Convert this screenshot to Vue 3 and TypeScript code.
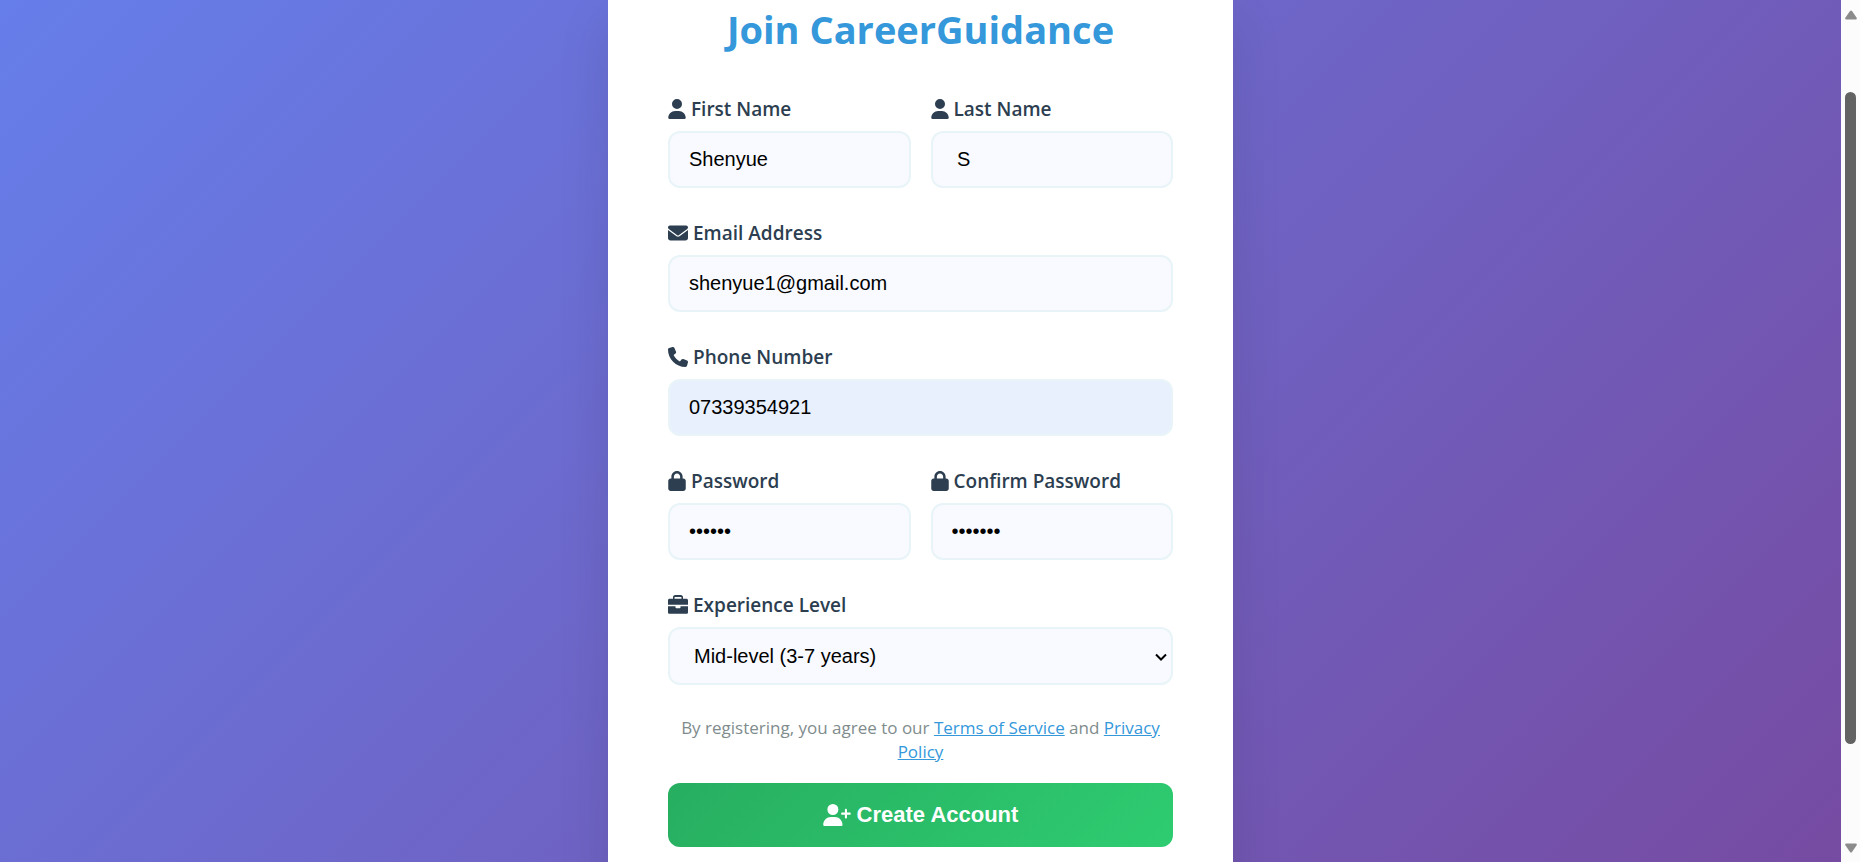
<script setup lang="ts">
import { reactive } from 'vue'

const form = reactive({
  firstName: 'Shenyue',
  lastName: ' S',
  email: 'shenyue1@gmail.com',
  phone: '07339354921',
  password: 'abc123',
  confirm: 'abc1234',
  level: 'mid',
})

const icons = {
  user: 'M224 256A128 128 0 1 0 224 0a128 128 0 1 0 0 256zm-45.7 48C79.8 304 0 383.8 0 482.3C0 498.7 13.3 512 29.7 512H418.3c16.4 0 29.7-13.3 29.7-29.7C448 383.8 368.2 304 269.7 304H178.3z',
  mail: 'M48 64C21.500 64 0 85.500 0 112c0 15.100 7.100 29.300 19.200 38.400L236.800 313.600c11.400 8.500 27 8.500 38.400 0L492.800 150.400c12.100-9.100 19.200-23.300 19.200-38.400c0-26.500-21.500-48-48-48H48zM0 176V384c0 35.300 28.700 64 64 64H448c35.300 0 64-28.700 64-64V176L294.400 339.200c-22.800 17.100-54 17.100-76.800 0L0 176z',
  phone: 'M164.900 24.600c-7.700-18.600-28-28.500-47.400-23.200l-88 24C12.100 30.200 0 46 0 64C0 311.400 200.600 512 448 512c18 0 33.800-12.100 38.600-29.500l24-88c5.300-19.400-4.600-39.700-23.200-47.400l-96-40c-16.300-6.800-35.200-2.100-46.300 11.600L304.700 368C234.300 334.700 177.300 277.700 144 207.300L193.300 167c13.700-11.200 18.400-30 11.600-46.300l-40-96z',
  lock: 'M144 144v48H304V144c0-44.200-35.800-80-80-80s-80 35.800-80 80zM80 192V144C80 64.500 144.500 0 224 0s144 64.500 144 144v48h16c35.300 0 64 28.700 64 64V448c0 35.300-28.700 64-64 64H64c-35.300 0-64-28.700-64-64V256c0-35.300 28.700-64 64-64H80z',
  briefcase: 'M176 48H336c4.400 0 8 3.600 8 8V96H168V56c0-4.400 3.600-8 8-8zm-48 8V96H40C16 96 0 112 0 136v112H512V136c0-24-16-40-40-40H384V56c0-30.900-25.100-56-56-56H184c-30.900 0-56 25.100-56 56zM512 288H320v32c0 12-8 20-20 20H212c-12 0-20-8-20-20V288H0V440c0 24 16 40 40 40H472c24 0 40-16 40-40V288z',
  userPlus: 'M96 128a128 128 0 1 1 256 0A128 128 0 1 1 96 128zM0 482.300C0 383.800 79.800 304 178.300 304h91.400C368.200 304 448 383.800 448 482.300c0 16.400-13.300 29.700-29.700 29.700H29.700C13.300 512 0 498.700 0 482.300zM504 312V248H440c-13.300 0-24-10.700-24-24s10.700-24 24-24h64V136c0-13.300 10.700-24 24-24s24 10.700 24 24v64h64c13.300 0 24 10.700 24 24s-10.700 24-24 24H552v64c0 13.300-10.700 24-24 24s-24-10.700-24-24z',
}
</script>

<template>
  <div class="window">
    <main class="page">
      <form class="card" @submit.prevent>
        <h1>Join CareerGuidance</h1>

        <div class="row">
          <div class="group">
            <label for="first">
              <svg class="icon" viewBox="0 0 448 512" aria-hidden="true"><path :d="icons.user" /></svg>
              First Name
            </label>
            <input id="first" v-model="form.firstName" type="text" />
          </div>
          <div class="group">
            <label for="last">
              <svg class="icon" viewBox="0 0 448 512" aria-hidden="true"><path :d="icons.user" /></svg>
              Last Name
            </label>
            <input id="last" v-model="form.lastName" type="text" />
          </div>
        </div>

        <div class="group">
          <label for="email">
            <svg class="icon wide" viewBox="0 0 512 512" aria-hidden="true"><path :d="icons.mail" /></svg>
            Email Address
          </label>
          <input id="email" v-model="form.email" type="email" />
        </div>

        <div class="group">
          <label for="phone">
            <svg class="icon wide" viewBox="0 0 512 512" aria-hidden="true"><path :d="icons.phone" /></svg>
            Phone Number
          </label>
          <input id="phone" v-model="form.phone" class="filled" type="tel" />
        </div>

        <div class="row">
          <div class="group">
            <label for="password">
              <svg class="icon" viewBox="0 0 448 512" aria-hidden="true"><path :d="icons.lock" /></svg>
              Password
            </label>
            <input id="password" v-model="form.password" type="password" />
          </div>
          <div class="group">
            <label for="confirm">
              <svg class="icon" viewBox="0 0 448 512" aria-hidden="true"><path :d="icons.lock" /></svg>
              Confirm Password
            </label>
            <input id="confirm" v-model="form.confirm" type="password" />
          </div>
        </div>

        <div class="group">
          <label for="level">
            <svg class="icon wide" viewBox="0 0 512 512" aria-hidden="true"><path :d="icons.briefcase" /></svg>
            Experience Level
          </label>
          <div class="select">
            <select id="level" v-model="form.level">
              <option value="mid">Mid-level (3-7 years)</option>
            </select>
            <svg viewBox="0 0 12 8" aria-hidden="true"><path d="M1 1.500 6 6.500 11 1.500" /></svg>
          </div>
        </div>

        <p class="terms">
          By registering, you agree to our <a href="#terms">Terms of Service</a> and
          <a href="#privacy">Privacy Policy</a>
        </p>

        <button class="submit" type="submit">
          <svg viewBox="0 0 640 512" aria-hidden="true"><path :d="icons.userPlus" /></svg>
          Create Account
        </button>
      </form>
    </main>

    <div class="scrollbar" aria-hidden="true">
      <svg viewBox="0 0 12 10"><path d="M5 1Q6 0 7 1L11.500 7.500Q12.500 9.500 10.500 9.500H1.500Q-.5 9.500 .5 7.500Z" /></svg>
      <div class="track">
        <span class="before"></span>
        <span class="thumb"></span>
        <span class="after"></span>
      </div>
      <svg viewBox="0 0 12 10"><path d="M5 9Q6 10 7 9L11.500 2.500Q12.500 .5 10.500 .5H1.500Q-.5 .5 .5 2.500Z" /></svg>
    </div>
  </div>
</template>

<style>
body {
  margin: 0;
}
</style>

<style scoped>
.window {
  display: flex;
  height: 100vh;
  overflow: hidden;
  font-family: "Open Sans", "Noto Sans", sans-serif;
}

.page {
  flex: 1;
  display: flex;
  justify-content: center;
  overflow: hidden;
  background: linear-gradient(135deg, #667eea 0%, #764ba2 100%);
}

.card {
  box-sizing: border-box;
  width: 100%;
  max-width: 625px;
  min-height: 100%;
  align-self: flex-start;
  padding: 2px 60px 60px;
  background: #fff;
  box-shadow: 0 20px 50px rgba(0, 0, 0, 0.1);
}

h1 {
  margin: 0 0 39px;
  color: #3498db;
  font-size: 38px;
  font-weight: 700;
  line-height: 54px;
  text-align: center;
  white-space: nowrap;
}

.row {
  display: grid;
  grid-template-columns: 1fr 1fr;
  gap: 20px;
}

.group {
  margin-bottom: 31px;
}

label {
  display: flex;
  align-items: center;
  gap: 5px;
  height: 27px;
  margin-bottom: 9px;
  color: #2c3e50;
  font-size: 19px;
  font-weight: 600;
  white-space: nowrap;
}

.icon {
  width: 18px;
  height: 20px;
  fill: currentColor;
}

.icon.wide {
  width: 20px;
}

input,
select {
  display: block;
  box-sizing: border-box;
  width: 100%;
  height: 57px;
  padding: 0 19px;
  border: 2px solid #e8f4f8;
  border-radius: 12px;
  background: #f8faff;
  color: #000;
  font-family: "Liberation Sans", Arial, sans-serif;
  font-size: 20px;
}

.select {
  position: relative;
}

.select select {
  appearance: none;
  height: 58px;
  padding: 0 24px;
}

.select svg {
  position: absolute;
  top: 26px;
  right: 6px;
  width: 12px;
  height: 8px;
  fill: none;
  stroke: #000;
  stroke-width: 2;
  pointer-events: none;
}

.filled {
  background: #e8f0fe;
}

.terms {
  margin: 0 0 19px;
  color: #7f8c8d;
  font-size: 17px;
  line-height: 24px;
  text-align: center;
}

.terms a {
  color: #3498db;
}

.submit {
  display: flex;
  align-items: center;
  justify-content: center;
  gap: 6px;
  width: 100%;
  height: 64px;
  padding: 0;
  border: 0;
  border-radius: 12px;
  background: linear-gradient(135deg, #27ae60, #2ecc71);
  color: #fff;
  font-family: "Liberation Sans", Arial, sans-serif;
  font-size: 22px;
  font-weight: 700;
}

.submit svg {
  width: 28px;
  height: 22px;
  fill: currentColor;
}

.scrollbar {
  box-sizing: border-box;
  display: flex;
  flex-direction: column;
  align-items: center;
  width: 19px;
  padding: 10px 0 9px;
  background: #fcfcfc;
}

.scrollbar svg {
  width: 12px;
  height: 10px;
  fill: #8b8b8b;
}

.track {
  flex: 1;
  display: flex;
  flex-direction: column;
  width: 11px;
}

.before {
  flex: 72;
}

.thumb {
  flex: 652;
  border-radius: 6px;
  background: #636363;
}

.after {
  flex: 99;
}
</style>
